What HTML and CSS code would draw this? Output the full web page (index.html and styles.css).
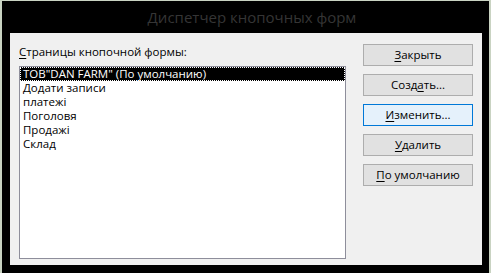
FILE: index.html
```html
<!DOCTYPE html>
<html lang="ru">
<head>
<meta charset="utf-8">
<link rel="stylesheet" href="styles.css">
</head>
<body>
<div class="window">
  <div class="title">Диспетчер кнопочных форм</div>
  <div class="client">
    <div class="left">
      <div class="label"><u>С</u>траницы кнопочной формы:</div>
      <div class="list">
        <div class="row selected">ТОВ"DAN FARM" (По умолчанию)</div>
        <div class="row">Додати записи</div>
        <div class="row">платежі</div>
        <div class="row">Поголовя</div>
        <div class="row">Продажі</div>
        <div class="row">Склад</div>
      </div>
    </div>
    <div class="buttons">
      <div class="btn"><u>З</u>акрыть</div>
      <div class="btn">Созд<u>а</u>ть...</div>
      <div class="btn focus"><u>И</u>зменить...</div>
      <div class="btn"><u>У</u>далить</div>
      <div class="btn"><u>П</u>о умолчанию</div>
    </div>
  </div>
</div>
</body>
</html>
```
FILE: styles.css
```css
html, body {
  margin: 0;
  padding: 0;
}
body {
  width: 491px;
  height: 273px;
  background: #c9d3c2;
  overflow: hidden;
  font-family: "Segoe UI", "Open Sans", "Noto Sans", sans-serif;
  font-size: 11.5px;
  color: #000;
}
.window {
  margin: 1px 2px 0 2px;
  height: 272px;
  box-sizing: border-box;
  background: #000;
  padding: 0 7px 8px 8px;
  display: flex;
  flex-direction: column;
}
.title {
  height: 32px;
  line-height: 33px;
  text-align: center;
  color: #353535;
  font-size: 15px;
  padding-left: 12px;
}
.client {
  flex: 1;
  background: #f0f0f0;
  display: flex;
  padding: 11px 0 0 9px;
  gap: 17px;
}
.left {
  width: 327px;
  display: flex;
  flex-direction: column;
}
.label {
  height: 16px;
  line-height: 16px;
  margin-bottom: 6px;
}
u {
  text-decoration: underline;
  text-underline-offset: 2px;
}
.list {
  height: 193px;
  box-sizing: border-box;
  border: 1px solid #8e8e9b;
  background: #fff;
}
.row {
  height: 14px;
  line-height: 14px;
  padding-left: 3px;
  white-space: nowrap;
}
.row.selected {
  background: #000;
  color: #fff;
  outline: 1px dotted #fff;
  outline-offset: -1px;
}
.buttons {
  width: 110px;
  display: flex;
  flex-direction: column;
  gap: 8px;
}
.btn {
  height: 22px;
  box-sizing: border-box;
  border: 1px solid #adadad;
  background: #e1e1e1;
  text-align: center;
  line-height: 19px;
}
.btn.focus {
  border-color: #0078d7;
  background: #e5f1fb;
}
```
